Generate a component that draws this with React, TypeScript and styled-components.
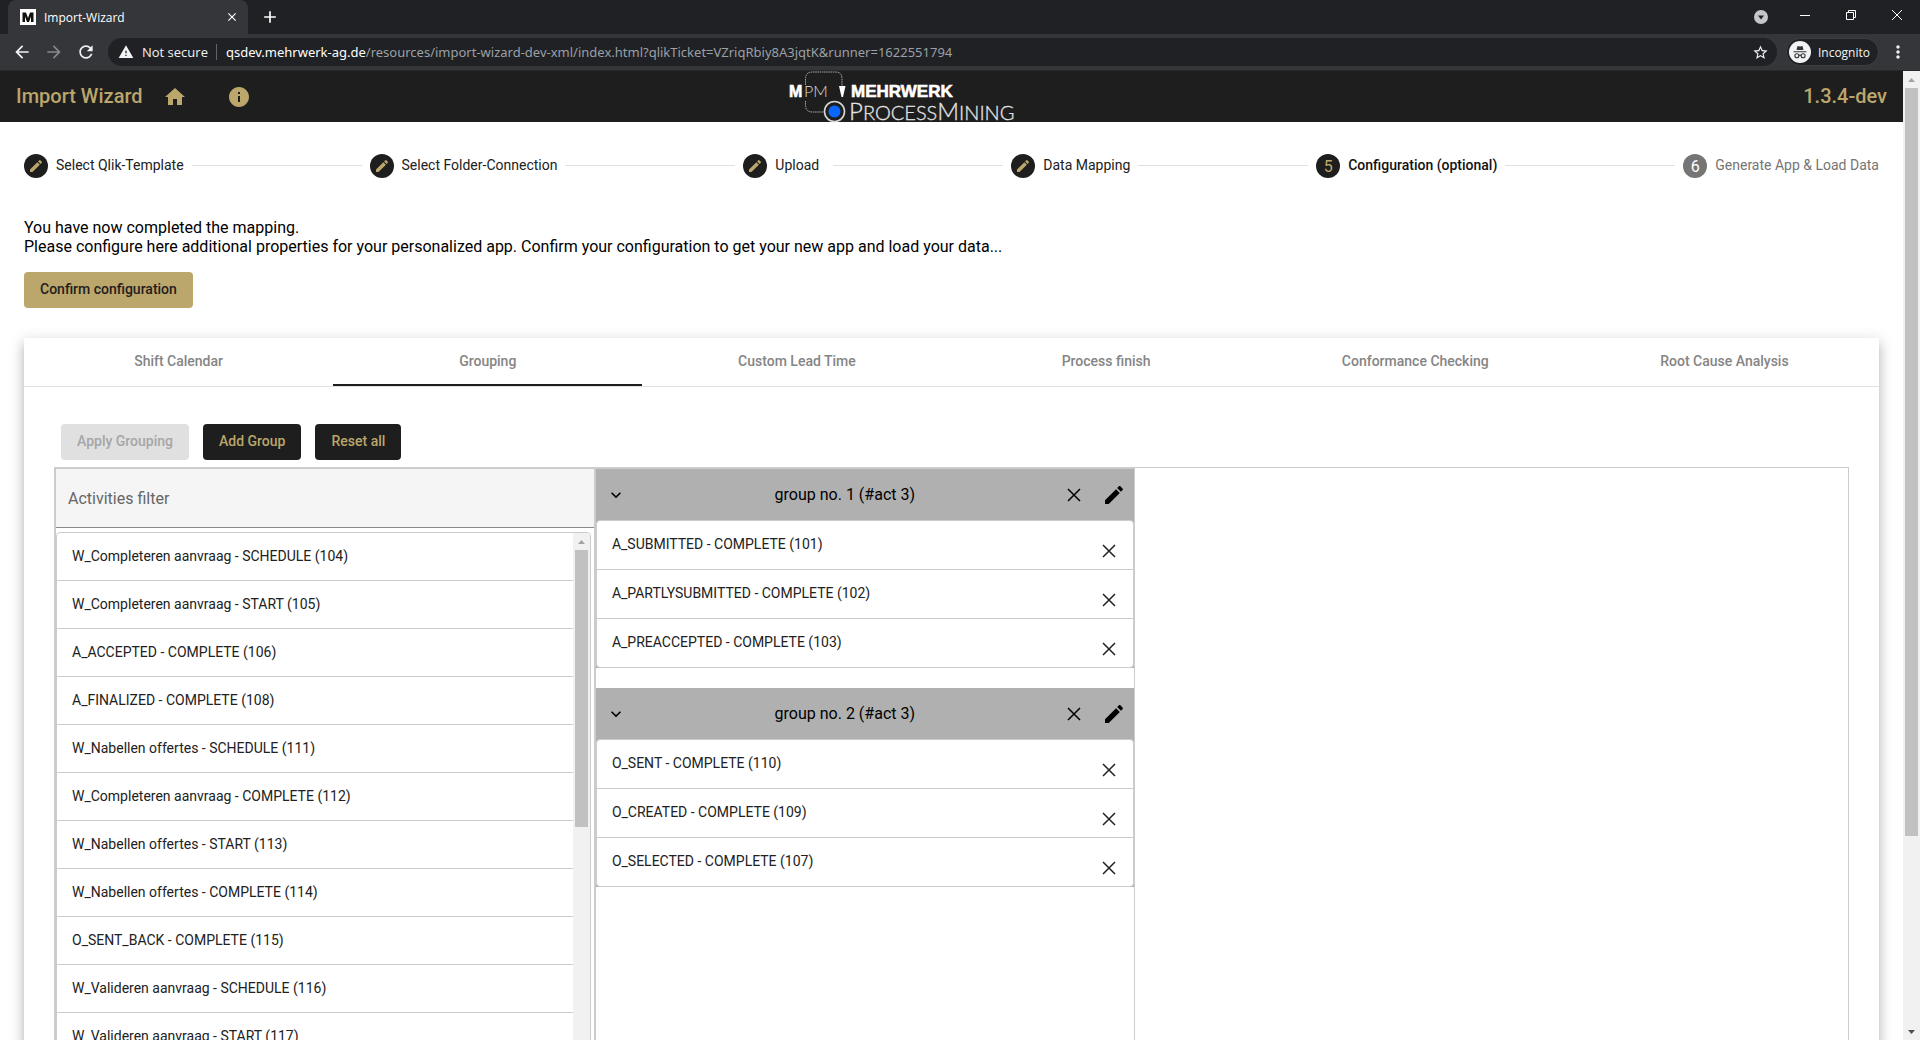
import React from "react";
import styled, { createGlobalStyle, css } from "styled-components";

const gold = "#bba66c";
const ink = "#1e1e1e";
const line = "#cccccc";

const GlobalStyle = createGlobalStyle`
  *, *::before, *::after { box-sizing: border-box; }
  html, body, #root { height: 100%; }
  body {
    margin: 0;
    overflow: hidden;
    font-family: Roboto, "Liberation Sans", sans-serif;
    font-size: 14px;
    color: #000;
    background: #fff;
  }
  button, input { font: inherit; }
`;

const Window = styled.div`
  display: flex;
  flex-direction: column;
  height: 100vh;
`;

const plainButton = css`
  display: inline-flex;
  align-items: center;
  justify-content: center;
  padding: 0;
  border: 0;
  background: none;
  color: inherit;
  cursor: pointer;
`;

const IconButton = styled.button<{ $size?: number }>`
  ${plainButton}
  flex: none;
  width: ${(p) => p.$size ?? 24}px;
  height: ${(p) => p.$size ?? 24}px;

  &:disabled { color: #86888b; }
`;

/* Browser frame */

const TabStrip = styled.div`
  display: flex;
  flex: none;
  height: 34px;
  padding-left: 8px;
  background: #202124;
  color: #fff;
  font-family: "Open Sans", "Noto Sans", sans-serif;
  font-size: 12px;
`;

const BrowserTab = styled.div`
  display: flex;
  align-items: center;
  gap: 8px;
  width: 240px;
  padding: 0 8px 0 12px;
  border-radius: 8px 8px 0 0;
  background: #35363a;
`;

const BrowserTabTitle = styled.span`
  flex: 1;
`;

const NewTabButton = styled(IconButton)`
  align-self: center;
  margin-left: 10px;
`;

const WindowControls = styled.div`
  display: flex;
  margin-left: auto;
`;

const WindowButton = styled.button`
  ${plainButton}
  width: 46px;
  height: 29px;
`;

const TabSearchButton = styled(IconButton)`
  align-self: center;
  margin-right: 9px;
`;

const Toolbar = styled.div`
  display: flex;
  align-items: center;
  flex: none;
  height: 37px;
  padding: 0 10px;
  border-bottom: 1px solid #28292b;
  background: #35363a;
  color: #f1f3f4;
  font-family: "Open Sans", "Noto Sans", sans-serif;
`;

const NavButtons = styled.div`
  display: flex;
  gap: 8px;
  margin-right: 10px;
`;

const AddressBar = styled.div`
  display: flex;
  flex: 1;
  align-items: center;
  height: 28px;
  padding: 0 6px 0 10px;
  border-radius: 14px;
  background: #202124;
  font-size: 13px;
`;

const Security = styled.span`
  display: flex;
  align-items: center;
  gap: 8px;
  padding-right: 8px;
  border-right: 1px solid #5f6368;
  line-height: 16px;
`;

const Url = styled.span`
  flex: 1;
  padding-left: 9px;
  color: #9aa0a6;
  font-family: "Noto Sans", "Open Sans", sans-serif;
`;

const Host = styled.span`
  color: #fff;
`;

const Incognito = styled.div`
  display: flex;
  align-items: center;
  gap: 7px;
  height: 28px;
  margin: 0 7px 0 9px;
  padding: 0 8px 0 2px;
  border: 1px solid #3c4043;
  border-radius: 14px;
  background: #202124;
  font-size: 12px;
`;

/* Page */

const Viewport = styled.div`
  display: flex;
  flex: 1;
  min-height: 0;
`;

const Page = styled.div`
  flex: 1;
  min-width: 0;
  overflow: hidden;
`;

const ScrollTrack = styled.div`
  display: flex;
  flex-direction: column;
  align-items: center;
  flex: none;
  width: 17px;
  background: #f1f1f1;
`;

const ScrollThumb = styled.div<{ $grow: number }>`
  flex: ${(p) => p.$grow} 1 0;
  width: 13px;
  background: #c1c1c1;
`;

const ScrollRest = styled.div<{ $grow: number }>`
  flex: ${(p) => p.$grow} 1 0;
`;

const AppBar = styled.header`
  display: grid;
  grid-template-columns: 1fr auto 1fr;
  align-items: center;
  height: 51px;
  padding: 0 16px;
  background: ${ink};
  color: ${gold};
  font-size: 20px;
  font-weight: 500;
`;

const Brand = styled.div`
  display: flex;
  align-items: center;
  line-height: 24px;
`;

const BarText = styled.span`
  padding-bottom: 2px;
`;

const HomeButton = styled(IconButton)`
  margin: 0 40px 0 20px;
`;

const LogoSlot = styled.div`
  display: flex;
  padding-right: 94px;
`;

const LogoDrawing = styled.svg`
  display: block;
  overflow: visible;
`;

const Version = styled(BarText)`
  justify-self: end;
`;

const Stepper = styled.ol`
  display: flex;
  align-items: center;
  margin: 0;
  padding: 32px 24px 40px;
  list-style: none;
`;

const Step = styled.li`
  display: flex;
  flex: none;
  align-items: center;
`;

const StepIcon = styled.span<{ $pending: boolean }>`
  display: flex;
  align-items: center;
  justify-content: center;
  flex: none;
  width: 24px;
  height: 24px;
  margin-right: 8px;
  border-radius: 50%;
  background: ${(p) => (p.$pending ? "#757575" : ink)};
  color: ${(p) => (p.$pending ? "#fff" : gold)};
  font-size: 16px;
`;

const StepLabel = styled.span<{ $state: StepState }>`
  min-width: 50px;
  padding-bottom: 2px;
  line-height: 22px;
  white-space: nowrap;
  color: ${(p) => (p.$state === "pending" ? "#757575" : p.$state === "current" ? "#111" : "#212121")};
  font-weight: ${(p) => (p.$state === "current" ? 500 : 400)};
`;

const Connector = styled.li`
  flex: 1;
  height: 1px;
  margin: 0 8px 1px;
  background: #e0e0e0;
`;

const Main = styled.main`
  padding: 0 24px;
`;

const Intro = styled.p`
  margin: 0 0 16px;
  font-size: 16px;
  line-height: 19px;
`;

const ActionButton = styled.button<{ $tone?: "gold" | "dark" }>`
  height: 36px;
  padding: 0 16px 2px;
  border: 0;
  border-radius: 4px;
  background: ${(p) => (p.$tone === "gold" ? gold : ink)};
  color: ${(p) => (p.$tone === "gold" ? ink : gold)};
  font-weight: 500;
  cursor: pointer;

  &:disabled {
    background: #e0e0e0;
    color: #a6a6a6;
    cursor: default;
  }
`;

const Card = styled.section`
  margin-top: 30px;
  background: #fff;
  box-shadow:
    0 5px 5px -3px rgba(0, 0, 0, 0.2),
    0 8px 10px 1px rgba(0, 0, 0, 0.14),
    0 3px 14px 2px rgba(0, 0, 0, 0.12);
`;

const Tabs = styled.div`
  display: flex;
  border-bottom: 1px solid #e0e0e0;
`;

const Tab = styled.button<{ $active: boolean }>`
  flex: 1 1 0;
  height: 48px;
  padding: 0 0 2px;
  border: 0;
  background: none;
  box-shadow: ${(p) => (p.$active ? `inset 0 -2px ${ink}` : "none")};
  color: #858585;
  font-weight: 500;
  cursor: pointer;
`;

const CardBody = styled.div`
  padding: 37px 30px 30px;
`;

const Actions = styled.div`
  display: flex;
  gap: 14px;
  padding: 0 7px 7px;
`;

const Board = styled.div`
  display: flex;
  min-height: 680px;
  border: 1px solid ${line};
`;

const Column = styled.div`
  flex: 0 0 calc(30% + 2px);
  min-width: 0;
  border: 1px solid ${line};
`;

const FilterInput = styled.input`
  display: block;
  width: 100%;
  height: 59px;
  padding: 0 12px;
  border: 0;
  border-bottom: 1px solid #8a8a8a;
  border-radius: 0;
  outline: 0;
  background: #f5f5f5;
  color: #212121;
  font-size: 16px;

  &::placeholder { color: #666; opacity: 1; }
`;

const ActivityBox = styled.div`
  display: flex;
  height: 600px;
  margin: 4px 3px 0 0;
  overflow: hidden;
  border: 1px solid ${line};
  border-radius: 4px;
`;

const List = styled.ul`
  flex: 1;
  margin: 0;
  padding: 0;
  list-style: none;
`;

const Activity = styled.li`
  display: flex;
  align-items: center;
  height: 48px;
  padding: 0 15px 2px;
  border-bottom: 1px solid ${line};
  color: #212121;
`;

const Group = styled.section`
  margin-bottom: 20px;
  background: #b0b0b0;
`;

const GroupHeader = styled.header`
  display: flex;
  align-items: center;
  height: 51px;
  padding: 0 8px;
`;

const GroupTitle = styled.h2`
  flex: 1;
  margin: 0;
  font-size: 16px;
  font-weight: 400;
  text-align: center;
`;

const GroupTools = styled.div`
  display: flex;
  gap: 16px;
`;

const GroupList = styled(List)`
  border: 1px solid ${line};
  border-radius: 4px;
  background: #fff;
`;

const GroupItem = styled.li`
  display: flex;
  align-items: flex-start;
  justify-content: space-between;
  padding: 15px 12px 0 15px;
  color: #212121;
  line-height: 16px;

  & + & { border-top: 1px solid ${line}; }
`;

const RemoveButton = styled(IconButton)`
  margin: 3px 0 6px;
`;

/* Icons */

type IconProps = { d: string; size?: number };

const Icon = ({ d, size = 24 }: IconProps) => (
  <svg width={size} height={size} viewBox="0 0 24 24" fill="currentColor" aria-hidden="true">
    <path d={d} />
  </svg>
);

const Cross = () => (
  <svg width="24" height="24" viewBox="0 0 24 24" aria-hidden="true">
    <path d="M6 6l12 12M18 6L6 18" fill="none" stroke="currentColor" strokeWidth="1.5" />
  </svg>
);

const paths = {
  home: "M10 20v-6h4v6h5v-8h3L12 3 2 12h3v8z",
  info: "M12 2C6.48 2 2 6.48 2 12s4.48 10 10 10 10-4.48 10-10S17.52 2 12 2zm1 15h-2v-6h2v6zm0-8h-2V7h2v2z",
  edit: "M3 17.25V21h3.75L17.81 9.94l-3.75-3.75L3 17.25zM20.71 7.04c.39-.39.39-1.02 0-1.41l-2.34-2.34c-.39-.39-1.02-.39-1.41 0l-1.83 1.83 3.75 3.75 1.83-1.83z",
  close: "M19 6.41L17.59 5 12 10.59 6.41 5 5 6.41 10.59 12 5 17.59 6.41 19 12 13.41 17.59 19 19 17.59 13.41 12z",
  expand: "M16.59 8.59L12 13.17 7.41 8.59 6 10l6 6 6-6z",
  back: "M20 11H7.83l5.59-5.59L12 4l-8 8 8 8 1.41-1.41L7.83 13H20v-2z",
  forward: "M12 4l-1.41 1.41L16.17 11H4v2h12.17l-5.58 5.59L12 20l8-8z",
  reload: "M17.65 6.35C16.2 4.9 14.21 4 12 4c-4.42 0-7.99 3.58-7.99 8s3.57 8 7.99 8c3.73 0 6.84-2.55 7.73-6h-2.08c-.82 2.33-3.04 4-5.65 4-3.31 0-6-2.69-6-6s2.69-6 6-6c1.66 0 3.14.69 4.22 1.78L13 11h7V4l-2.35 2.35z",
  warning: "M1 21h22L12 2 1 21zm12-3h-2v-2h2v2zm0-4h-2v-4h2v4z",
  star: "M22 9.24l-7.19-.62L12 2 9.19 8.63 2 9.24l5.46 4.73L5.82 21 12 17.27 18.18 21l-1.63-7.03L22 9.24zM12 15.4l-3.76 2.27 1-4.28-3.32-2.88 4.38-.38L12 6.1l1.71 4.04 4.38.38-3.32 2.88 1 4.28L12 15.4z",
  more: "M12 8c1.1 0 2-.9 2-2s-.9-2-2-2-2 .9-2 2 .9 2 2 2zm0 2c-1.1 0-2 .9-2 2s.9 2 2 2 2-.9 2-2-.9-2-2-2zm0 6c-1.1 0-2 .9-2 2s.9 2 2 2 2-.9 2-2-.9-2-2-2z",
  add: "M19 13h-6v6h-2v-6H5v-2h6V5h2v6h6v2z",
};

const ScrollArrow = ({ down = false }: { down?: boolean }) => (
  <svg width="17" height="17" viewBox="0 0 17 17" aria-hidden="true">
    <path d={down ? "M5 7h7l-3.5 4z" : "M5 11h7l-3.5-4z"} fill={down ? "#505050" : "#a3a3a3"} />
  </svg>
);

const Favicon = () => (
  <svg width="16" height="16" viewBox="0 0 16 16" aria-hidden="true">
    <rect width="16" height="16" fill="#fff" />
    <path d="M2.5 13V3.5H6l2 5.5 2-5.5h3.5V13H11V7.5L9 13H7L5 7.500V13z" fill="#111" />
  </svg>
);

const IncognitoIcon = () => (
  <svg width="22" height="22" viewBox="0 0 22 22" aria-hidden="true">
    <circle cx="11" cy="11" r="11" fill="#f1f3f4" />
    <path d="M7.5 9l1-4 2.5.6 2.5-.6 1 4zM4.5 10.200h13v1.1h-13z" fill="#35363a" />
    <g fill="none" stroke="#35363a" strokeWidth="1.1">
      <circle cx="7.9" cy="14.8" r="2" />
      <circle cx="14.1" cy="14.8" r="2" />
      <path d="M9.9 14.5q1.1-.7 2.2 0" />
    </g>
  </svg>
);

const Logo = () => (
  <LogoDrawing width="232" height="51" viewBox="0 0 232 51" role="img" aria-label="MPM Mehrwerk ProcessMining">
    <path d="M16.5 14V8q0-7 7-7h23q6.500 0 6.500 7v8M16.500 30v4q0 7 7 7h11" fill="none" stroke="#a8a8a8" strokeDasharray="1.5 .7" />
    <path d="M50 15h6.500L54 26h-1.500z" fill="#fff" />
    <circle cx="45.500" cy="40.500" r="10" fill="none" stroke="#d6d6d6" strokeWidth="1.600" />
    <circle cx="45.500" cy="40.500" r="6" fill="#0a66ff" />
    <text x="0" y="26" fontFamily='"Liberation Sans", sans-serif' fontSize="16" fontWeight="700" fill="#fff" stroke="#fff" strokeWidth=".6">M</text>
    <text x="15" y="26" fontFamily="Lato, sans-serif" fontSize="16" fontWeight="300" fill="#ddd">PM</text>
    <text x="62" y="26" fontFamily='"Liberation Sans", sans-serif' fontSize="17" fontWeight="700" fill="#fff" stroke="#fff" strokeWidth=".6">MEHRWERK</text>
    <text x="60" y="49" fontFamily="Lato, sans-serif" fontWeight="300" fontSize="24" fill="#e4e4e4" stroke="#e4e4e4" strokeWidth=".3">
      P<tspan fontSize="20">ROCESS</tspan>M<tspan fontSize="20">INING</tspan>
    </text>
  </LogoDrawing>
);

/* Data */

type StepState = "done" | "current" | "pending";

const steps: { label: string; state: StepState }[] = [
  { label: "Select Qlik-Template", state: "done" },
  { label: "Select Folder-Connection", state: "done" },
  { label: "Upload", state: "done" },
  { label: "Data Mapping", state: "done" },
  { label: "Configuration (optional)", state: "current" },
  { label: "Generate App & Load Data", state: "pending" },
];

const tabs = ["Shift Calendar", "Grouping", "Custom Lead Time", "Process finish", "Conformance Checking", "Root Cause Analysis"];

const activities = [
  "W_Completeren aanvraag - SCHEDULE (104)",
  "W_Completeren aanvraag - START (105)",
  "A_ACCEPTED - COMPLETE (106)",
  "A_FINALIZED - COMPLETE (108)",
  "W_Nabellen offertes - SCHEDULE (111)",
  "W_Completeren aanvraag - COMPLETE (112)",
  "W_Nabellen offertes - START (113)",
  "W_Nabellen offertes - COMPLETE (114)",
  "O_SENT_BACK - COMPLETE (115)",
  "W_Valideren aanvraag - SCHEDULE (116)",
  "W_Valideren aanvraag - START (117)",
];

const groups = [
  {
    title: "group no. 1 (#act 3)",
    items: ["A_SUBMITTED - COMPLETE (101)", "A_PARTLYSUBMITTED - COMPLETE (102)", "A_PREACCEPTED - COMPLETE (103)"],
  },
  {
    title: "group no. 2 (#act 3)",
    items: ["O_SENT - COMPLETE (110)", "O_CREATED - COMPLETE (109)", "O_SELECTED - COMPLETE (107)"],
  },
];

const BrowserFrame = () => (
  <>
    <TabStrip>
      <BrowserTab>
        <Favicon />
        <BrowserTabTitle>Import-Wizard</BrowserTabTitle>
        <IconButton $size={16} aria-label="Close tab"><Icon d={paths.close} size={14} /></IconButton>
      </BrowserTab>
      <NewTabButton aria-label="New tab"><Icon d={paths.add} size={20} /></NewTabButton>
      <WindowControls>
        <TabSearchButton aria-label="Search tabs">
          <svg width="14" height="14" viewBox="0 0 14 14" aria-hidden="true">
            <circle cx="7" cy="7" r="7" fill="#c4c7ca" />
            <path d="M4 5.5h6L7 9.5z" fill="#202124" />
          </svg>
        </TabSearchButton>
        <WindowButton aria-label="Minimize">
          <svg width="10" height="10" viewBox="0 0 10 10"><path d="M0 5.5h10" stroke="#fff" /></svg>
        </WindowButton>
        <WindowButton aria-label="Restore">
          <svg width="10" height="10" viewBox="0 0 10 10" fill="none" stroke="#fff">
            <path d="M.5 2.5h7v7h-7zM2.5 2.5v-2h7v7h-2" />
          </svg>
        </WindowButton>
        <WindowButton aria-label="Close window">
          <svg width="10" height="10" viewBox="0 0 10 10"><path d="M0 0l10 10M10 0L0 10" stroke="#fff" /></svg>
        </WindowButton>
      </WindowControls>
    </TabStrip>
    <Toolbar>
      <NavButtons>
        <IconButton aria-label="Back"><Icon d={paths.back} size={20} /></IconButton>
        <IconButton aria-label="Forward" disabled><Icon d={paths.forward} size={20} /></IconButton>
        <IconButton aria-label="Reload"><Icon d={paths.reload} size={20} /></IconButton>
      </NavButtons>
      <AddressBar>
        <Security><Icon d={paths.warning} size={16} />Not secure</Security>
        <Url><Host>qsdev.mehrwerk-ag.de</Host>/resources/import-wizard-dev-xml/index.html?qlikTicket=VZriqRbiy8A3jqtK&amp;runner=1622551794</Url>
        <IconButton $size={20} aria-label="Bookmark"><Icon d={paths.star} size={17} /></IconButton>
      </AddressBar>
      <Incognito><IncognitoIcon />Incognito</Incognito>
      <IconButton aria-label="Menu"><Icon d={paths.more} size={20} /></IconButton>
    </Toolbar>
  </>
);

export default function App() {
  return (
    <Window>
      <GlobalStyle />
      <BrowserFrame />
      <Viewport>
        <Page>
          <AppBar>
            <Brand>
              <BarText>Import Wizard</BarText>
              <HomeButton aria-label="Home"><Icon d={paths.home} /></HomeButton>
              <IconButton aria-label="Info"><Icon d={paths.info} /></IconButton>
            </Brand>
            <LogoSlot><Logo /></LogoSlot>
            <Version>1.3.4-dev</Version>
          </AppBar>
          <Stepper>
            {steps.map((step, i) => (
              <React.Fragment key={step.label}>
                {i > 0 && <Connector aria-hidden="true" />}
                <Step>
                  <StepIcon $pending={step.state === "pending"}>
                    {step.state === "done" ? <Icon d={paths.edit} size={16} /> : i + 1}
                  </StepIcon>
                  <StepLabel $state={step.state}>{step.label}</StepLabel>
                </Step>
              </React.Fragment>
            ))}
          </Stepper>
          <Main>
            <Intro>
              You have now completed the mapping.
              <br />
              Please configure here additional properties for your personalized app. Confirm your configuration to get your new app and load your data...
            </Intro>
            <ActionButton $tone="gold">Confirm configuration</ActionButton>
            <Card>
              <Tabs role="tablist">
                {tabs.map((tab) => (
                  <Tab key={tab} role="tab" aria-selected={tab === "Grouping"} $active={tab === "Grouping"}>{tab}</Tab>
                ))}
              </Tabs>
              <CardBody>
                <Actions>
                  <ActionButton disabled>Apply Grouping</ActionButton>
                  <ActionButton>Add Group</ActionButton>
                  <ActionButton>Reset all</ActionButton>
                </Actions>
                <Board>
                  <Column>
                    <FilterInput aria-label="Activities filter" placeholder="Activities filter" />
                    <ActivityBox>
                      <List>
                        {activities.map((name) => <Activity key={name}>{name}</Activity>)}
                      </List>
                      <ScrollTrack>
                        <ScrollArrow />
                        <ScrollThumb $grow={277} />
                        <ScrollRest $grow={287} />
                        <ScrollArrow down />
                      </ScrollTrack>
                    </ActivityBox>
                  </Column>
                  <Column>
                    {groups.map((group) => (
                      <Group key={group.title}>
                        <GroupHeader>
                          <IconButton aria-label="Collapse group"><Icon d={paths.expand} size={20} /></IconButton>
                          <GroupTitle>{group.title}</GroupTitle>
                          <GroupTools>
                            <IconButton aria-label="Delete group"><Cross /></IconButton>
                            <IconButton aria-label="Rename group"><Icon d={paths.edit} /></IconButton>
                          </GroupTools>
                        </GroupHeader>
                        <GroupList>
                          {group.items.map((item) => (
                            <GroupItem key={item}>
                              {item}
                              <RemoveButton aria-label={`Remove ${item}`}><Cross /></RemoveButton>
                            </GroupItem>
                          ))}
                        </GroupList>
                      </Group>
                    ))}
                  </Column>
                </Board>
              </CardBody>
            </Card>
          </Main>
        </Page>
        <ScrollTrack>
          <ScrollArrow />
          <ScrollThumb $grow={748} />
          <ScrollRest $grow={187} />
          <ScrollArrow down />
        </ScrollTrack>
      </Viewport>
    </Window>
  );
}
